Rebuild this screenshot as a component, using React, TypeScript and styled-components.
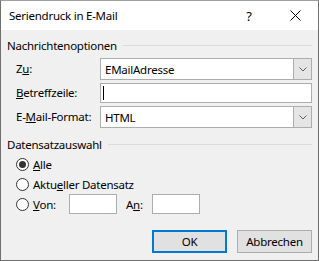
import React from "react";
import styled, { createGlobalStyle } from "styled-components";

const Global = createGlobalStyle`
  html, body { margin: 0; padding: 0; background: #f0f0f0; }
  body { font-family: "Noto Sans", "Open Sans", sans-serif; font-size: 11.5px; letter-spacing: -0.25px; color: #000; }
  * { box-sizing: border-box; }
`;

const Window = styled.div`
  width: 319px;
  height: 261px;
  border: 1px solid #6f6f6f;
  border-top-color: #a0a0a0;
  background: #f0f0f0;
  display: flex;
  flex-direction: column;
`;

const TitleBar = styled.div`
  height: 29px;
  background: #fff;
  display: flex;
  align-items: center;
  flex-shrink: 0;
`;

const Title = styled.div`
  flex: 1;
  padding-left: 8px;
  color: #000;
`;

const CaptionButton = styled.div`
  width: 46px;
  height: 29px;
  display: flex;
  align-items: center;
  justify-content: center;
  font-size: 13px;
  color: #000;
`;

const Body = styled.div`
  flex: 1;
  display: flex;
  flex-direction: column;
  padding: 7px 6px 7px 6px;
`;

const GroupHeader = styled.div<{ $gap?: number }>`
  display: flex;
  align-items: center;
  height: 16px;
  gap: 6px;
  margin-top: ${(p) => p.$gap ?? 0}px;
  &::after {
    content: "";
    flex: 1;
    height: 1px;
    background: #dcdcdc;
  }
`;

const Form = styled.div`
  display: grid;
  grid-template-columns: 84px 212px;
  row-gap: 3px;
  margin: 5px 0 0 9px;
  align-items: center;
`;

const Label = styled.label`
  line-height: 16px;
`;

const Combo = styled.div`
  height: 22px;
  border: 1px solid #adadad;
  background: #fff;
  display: flex;
  align-items: stretch;
`;

const ComboText = styled.div`
  flex: 1;
  display: flex;
  align-items: center;
  padding-left: 4px;
`;

const ComboButton = styled.div`
  width: 18px;
  background: #e5e5e5;
  border-left: 1px solid #adadad;
  display: flex;
  align-items: center;
  justify-content: center;
`;

const TextBox = styled.div<{ $w?: number }>`
  height: 20px;
  width: ${(p) => (p.$w ? `${p.$w}px` : "auto")};
  border: 1px solid #adadad;
  background: #fff;
  display: flex;
  align-items: center;
  padding-left: 2px;
`;

const Caret = styled.span`
  width: 1px;
  height: 14px;
  background: #000;
`;

const RadioList = styled.div`
  display: flex;
  flex-direction: column;
  margin: 2px 0 0 9px;
`;

const RadioRow = styled.div`
  height: 20px;
  display: flex;
  align-items: center;
`;

const RadioCircle = styled.span<{ $checked?: boolean }>`
  width: 13px;
  height: 13px;
  border-radius: 50%;
  border: 1px solid #333;
  background: #fff;
  margin-right: 4px;
  display: flex;
  align-items: center;
  justify-content: center;
  &::after {
    content: "";
    width: 7px;
    height: 7px;
    border-radius: 50%;
    background: ${(p) => (p.$checked ? "#333" : "transparent")};
  }
`;

const RangeLabel = styled.span<{ $w: number; $ml?: number }>`
  width: ${(p) => p.$w}px;
  margin-left: ${(p) => p.$ml ?? 0}px;
`;

const Footer = styled.div`
  margin-top: auto;
  display: flex;
  justify-content: flex-end;
  gap: 10px;
`;

const Button = styled.div<{ $default?: boolean }>`
  width: 75px;
  height: 23px;
  background: #e1e1e1;
  border: ${(p) => (p.$default ? "2px solid #0078d7" : "1px solid #adadad")};
  display: flex;
  align-items: center;
  justify-content: center;
`;

const Chevron = () => (
  <svg width="8" height="5" viewBox="0 0 8 5">
    <path d="M0.5 0.5 L4 4 L7.5 0.5" fill="none" stroke="#606060" strokeWidth="1" />
  </svg>
);

const CloseIcon = () => (
  <svg width="11" height="11" viewBox="0 0 11 11">
    <path d="M0.5 0.5 L10.5 10.5 M10.5 0.5 L0.5 10.5" stroke="#000" strokeWidth="1" />
  </svg>
);

export default function App() {
  return (
    <>
      <Global />
      <Window>
        <TitleBar>
          <Title>Seriendruck in E-Mail</Title>
          <CaptionButton>?</CaptionButton>
          <CaptionButton>
            <CloseIcon />
          </CaptionButton>
        </TitleBar>
        <Body>
          <GroupHeader>Nachrichtenoptionen</GroupHeader>
          <Form>
            <Label>
              Z<u>u</u>:
            </Label>
            <Combo>
              <ComboText>EMailAdresse</ComboText>
              <ComboButton>
                <Chevron />
              </ComboButton>
            </Combo>
            <Label>
              <u>B</u>etreffzeile:
            </Label>
            <TextBox>
              <Caret />
            </TextBox>
            <Label>
              E-<u>M</u>ail-Format:
            </Label>
            <Combo>
              <ComboText>HTML</ComboText>
              <ComboButton>
                <Chevron />
              </ComboButton>
            </Combo>
          </Form>
          <GroupHeader $gap={8}>Datensatzauswahl</GroupHeader>
          <RadioList>
            <RadioRow>
              <RadioCircle $checked />
              <span>
                <u>A</u>lle
              </span>
            </RadioRow>
            <RadioRow>
              <RadioCircle />
              <span>
                Aktu<u>e</u>ller Datensatz
              </span>
            </RadioRow>
            <RadioRow>
              <RadioCircle />
              <RangeLabel $w={36}>
                <u>V</u>on:
              </RangeLabel>
              <TextBox $w={48} />
              <RangeLabel $w={26} $ml={9}>
                A<u>n</u>:
              </RangeLabel>
              <TextBox $w={48} />
            </RadioRow>
          </RadioList>
          <Footer>
            <Button $default>OK</Button>
            <Button>Abbrechen</Button>
          </Footer>
        </Body>
      </Window>
    </>
  );
}
